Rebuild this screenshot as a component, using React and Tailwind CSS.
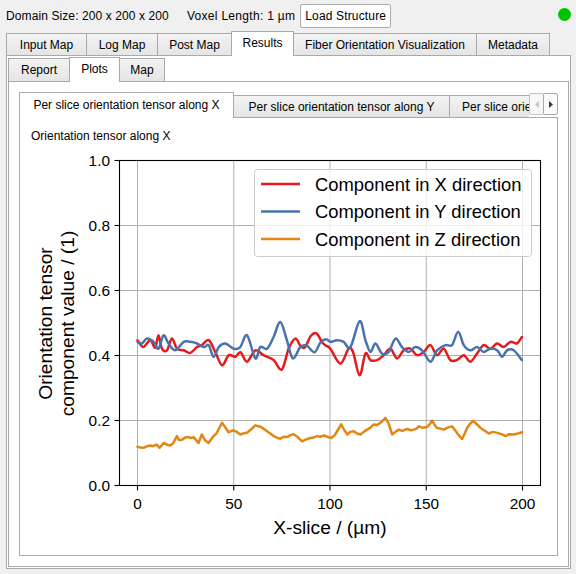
import React from 'react'

// plot geometry, page pixels
const L = 119.5
const R = 540.5
const T = 160.5
const B = 485.5
const X = u => 137.5 + u * 1.925
const Y = v => 485.5 - v * 325

const RED = [[0,0.447],[3,0.426],[6.6,0.447],[9.2,0.424],[10.9,0.462],[12.7,0.421],[15.3,0.416],[17.9,0.452],[20.5,0.421],[24,0.416],[27.4,0.408],[30.9,0.426],[33.5,0.432],[37,0.447],[40.4,0.411],[43.9,0.37],[47.4,0.401],[50.8,0.396],[53.5,0.41],[56.9,0.381],[61.2,0.416],[65.5,0.401],[70.7,0.386],[75,0.357],[78.5,0.421],[82,0.452],[84.6,0.43],[87,0.425],[90,0.46],[93,0.468],[96,0.44],[98,0.43],[100.2,0.421],[105.4,0.375],[109.7,0.421],[112,0.41],[115.4,0.339],[118.4,0.406],[121,0.386],[124.5,0.386],[127.9,0.401],[131.4,0.421],[134.8,0.391],[138.3,0.416],[141.8,0.421],[145.2,0.401],[148.7,0.411],[152.2,0.432],[155.6,0.401],[159.1,0.421],[162.5,0.386],[166,0.386],[169.5,0.401],[172.9,0.381],[176.4,0.406],[179.8,0.432],[183.3,0.421],[186.8,0.437],[190.2,0.426],[193.7,0.442],[197.1,0.437],[199.7,0.457]]

const BLUE = [[0,0.442],[2.3,0.437],[4.9,0.452],[8.4,0.442],[10.9,0.421],[13.5,0.462],[16.1,0.437],[19.6,0.416],[24,0.442],[27.4,0.442],[30.9,0.437],[34.4,0.426],[37,0.432],[39.5,0.396],[42.2,0.426],[45.6,0.437],[50,0.421],[53.4,0.426],[56.9,0.462],[61.2,0.391],[63.8,0.426],[67.3,0.421],[70.7,0.457],[74.2,0.503],[77.6,0.447],[80.7,0.391],[84.6,0.426],[88,0.43],[92,0.41],[95,0.44],[98,0.45],[100.2,0.442],[103.7,0.447],[107.1,0.442],[110.6,0.426],[115.4,0.506],[118.4,0.447],[121,0.411],[123.6,0.437],[127,0.406],[130.5,0.411],[134,0.452],[137.4,0.426],[140.9,0.411],[144.3,0.426],[147.8,0.416],[152.2,0.381],[155.6,0.416],[160,0.432],[163.4,0.432],[166.6,0.473],[169.5,0.432],[172.9,0.416],[176.4,0.426],[179.8,0.411],[183.3,0.421],[186.8,0.416],[189.4,0.396],[192,0.416],[195.4,0.416],[199.7,0.386]]

const ORANGE = [[0,0.119],[1.5,0.117],[3.1,0.116],[5,0.121],[6.6,0.123],[8,0.121],[10,0.126],[11.5,0.116],[13.6,0.131],[15,0.126],[17,0.123],[18.5,0.13],[20.5,0.152],[21.5,0.14],[23.1,0.141],[25,0.148],[26.5,0.149],[28,0.146],[29.1,0.149],[31.7,0.131],[33.4,0.157],[35,0.14],[36.9,0.131],[38,0.14],[39.5,0.152],[41,0.16],[43.9,0.193],[45.5,0.18],[47.3,0.164],[49.9,0.17],[51.5,0.165],[53.4,0.157],[55,0.16],[56.8,0.162],[58.5,0.17],[61.2,0.185],[63.8,0.181],[65.5,0.175],[67.3,0.167],[69,0.16],[70.7,0.152],[72.5,0.147],[74.2,0.144],[76,0.15],[77.7,0.149],[79.5,0.155],[81.1,0.158],[83,0.15],[85.5,0.136],[87.5,0.142],[89.8,0.146],[91.5,0.148],[93.4,0.152],[95,0.15],[96.8,0.154],[98.5,0.15],[100.6,0.146],[102.5,0.155],[104,0.17],[105.8,0.188],[107.5,0.17],[109,0.157],[110.5,0.165],[112.4,0.167],[114,0.16],[115.8,0.157],[117.5,0.165],[119.3,0.172],[121,0.178],[122.7,0.188],[124.5,0.186],[126.2,0.193],[127.5,0.2],[128.8,0.208],[130.5,0.19],[132.3,0.157],[134,0.165],[135.7,0.172],[137.5,0.168],[140.1,0.174],[142,0.17],[143.5,0.172],[145,0.175],[146.1,0.182],[148,0.178],[150.4,0.18],[152,0.19],[153,0.2],[154.2,0.188],[155.6,0.177],[157.5,0.175],[159.1,0.172],[161,0.178],[163.4,0.182],[165,0.17],[166.8,0.155],[168.6,0.143],[170,0.16],[171.2,0.177],[172.8,0.19],[174.4,0.199],[176,0.19],[178.2,0.177],[180,0.17],[182.5,0.16],[184.5,0.165],[186.8,0.162],[189,0.158],[191.2,0.152],[193,0.158],[195.5,0.157],[197.5,0.16],[199.8,0.164]]

// catmull-rom through the traced points
function smoothPath(pts) {
  const p = pts.map(([u, v]) => [X(u), Y(v)])
  const f = n => n.toFixed(2)
  let d = `M${f(p[0][0])},${f(p[0][1])}`
  for (let i = 0; i < p.length - 1; i++) {
    const p0 = p[i - 1] || p[i]
    const p1 = p[i]
    const p2 = p[i + 1]
    const p3 = p[i + 2] || p2
    const c1x = p1[0] + (p2[0] - p0[0]) / 6
    const c1y = p1[1] + (p2[1] - p0[1]) / 6
    const c2x = p2[0] - (p3[0] - p1[0]) / 6
    const c2y = p2[1] - (p3[1] - p1[1]) / 6
    d += ` C${f(c1x)},${f(c1y)} ${f(c2x)},${f(c2y)} ${f(p2[0])},${f(p2[1])}`
  }
  return d
}

const linePath = pts => 'M' + pts.map(([u, v]) => `${X(u).toFixed(2)},${Y(v).toFixed(2)}`).join(' L')

const SERIES = [
  { label: 'Component in X direction', color: '#e41a1c', d: smoothPath(RED) },
  { label: 'Component in Y direction', color: '#4a72ac', d: smoothPath(BLUE) },
  { label: 'Component in Z direction', color: '#e38614', d: linePath(ORANGE) },
]

const XT = [0, 50, 100, 150, 200]
const YT = [0, 0.2, 0.4, 0.6, 0.8, 1.0]

function Plot() {
  return (
    <svg width="536" height="408" className="block">
      <g transform="translate(-20 -146)" fontFamily="'Liberation Sans', Arial, sans-serif" fill="#000">
        {XT.map(u => (
          <line key={'gx' + u} x1={X(u)} x2={X(u)} y1={T} y2={B} stroke="#b0b0b0" strokeWidth="1" />
        ))}
        {YT.map(v => (
          <line key={'gy' + v} x1={L} x2={R} y1={Y(v)} y2={Y(v)} stroke="#b0b0b0" strokeWidth="1" />
        ))}

        {SERIES.map(s => (
          <path key={s.label} d={s.d} fill="none" stroke={s.color} strokeWidth="2.5" strokeLinejoin="round" strokeLinecap="round" />
        ))}

        <rect x={L} y={T} width={R - L} height={B - T} fill="none" stroke="#000" strokeWidth="1.1" />

        {XT.map(u => (
          <g key={'tx' + u}>
            <line x1={X(u)} x2={X(u)} y1={B} y2={B + 5} stroke="#000" strokeWidth="1.1" />
            <text x={X(u)} y="508.5" fontSize="15.4" textAnchor="middle">{u}</text>
          </g>
        ))}
        {YT.map(v => (
          <g key={'ty' + v}>
            <line x1={L - 5} x2={L} y1={Y(v)} y2={Y(v)} stroke="#000" strokeWidth="1.1" />
            <text x="110" y={Y(v) + 5.5} fontSize="15.4" textAnchor="end">{v.toFixed(1)}</text>
          </g>
        ))}

        <text x={(L + R) / 2} y="533.5" fontSize="19.2" textAnchor="middle">X-slice / (µm)</text>
        <text transform="translate(51.7 323.5) rotate(-90)" fontSize="19.2" textAnchor="middle">Orientation tensor</text>
        <text transform="translate(74 323.5) rotate(-90)" fontSize="19.2" textAnchor="middle">component value / (1)</text>

        <rect x="254.5" y="169.5" width="277" height="87" rx="3" fill="#fff" fillOpacity="0.8" stroke="#cccccc" strokeWidth="1" />
        {SERIES.map((s, i) => {
          const ly = 184 + i * 27.5
          return (
            <g key={'lg' + i}>
              <line x1="261" x2="300" y1={ly} y2={ly} stroke={s.color} strokeWidth="2.5" />
              <text x="315" y={ly + 6.8} fontSize="18.4">{s.label}</text>
            </g>
          )
        })}
      </g>
    </svg>
  )
}

const TOP_TABS = [
  { label: 'Input Map', w: 'w-[81px]' },
  { label: 'Log Map', w: 'w-[72px]' },
  { label: 'Post Map', w: 'w-[75px]' },
  { label: 'Results', w: 'w-[63px]', active: true },
  { label: 'Fiber Orientation Visualization', w: 'w-[184px]' },
  { label: 'Metadata', w: 'w-[74px]' },
]

const SUB_TABS = [
  { label: 'Report', w: 'w-[62px]' },
  { label: 'Plots', w: 'w-[51px]', active: true },
  { label: 'Map', w: 'w-[46px]' },
]

const tabBase = 'flex items-center justify-center whitespace-nowrap border border-[#a9a9a9]'
const tabIdle = 'bg-linear-to-b from-[#f3f3f3] to-[#e5e5e5]'
const tabOn = 'bg-white border-b-0 relative z-10'

export default function App() {
  return (
    <div className="w-[576px] h-[574px] overflow-hidden bg-[#f0f0f0] pl-[6px] pr-[5px] text-[12px] leading-[14px] text-black font-['Liberation_Sans',Arial,sans-serif]">
      {/* header row */}
      <div className="h-[31px] flex items-center">
        <span className="tracking-[0.1px]">Domain Size: 200 x 200 x 200</span>
        <span className="ml-[18px] tracking-[0.3px]">Voxel Length: 1 µm</span>
        <button className="ml-[5px] h-[24px] pl-[4px] pr-[4px] border border-[#adadad] bg-[#fdfdfd] rounded-[2px] tracking-[0.15px]">
          Load Structure
        </button>
        <div className="flex-1" />
        <div className="self-start mt-[8px] w-[13px] h-[13px] rounded-full bg-[#00c400]" />
      </div>

      {/* main tabs */}
      <div className="flex items-end h-[25px] -mb-px">
        {TOP_TABS.map((t, i) => (
          <div
            key={t.label}
            className={`${tabBase} ${t.w} ${i > 0 ? '-ml-px' : ''} ${t.active ? `${tabOn} h-[25px] pb-[2px]` : `${tabIdle} h-[23px]`}`}
          >
            {t.label}
          </div>
        ))}
      </div>

      <div className="h-[514px] border border-[#a9a9a9] bg-white p-px flex flex-col">
        {/* result sub tabs */}
        <div className="flex items-end h-[25px] -mb-px">
          {SUB_TABS.map((t, i) => (
            <div
              key={t.label}
              className={`${tabBase} ${t.w} ${i > 0 ? '-ml-px' : ''} ${t.active ? `${tabOn} h-[25px] pb-[2px]` : `${tabIdle} h-[24px]`}`}
            >
              {t.label}
            </div>
          ))}
        </div>

        <div className="flex-1 border border-[#a9a9a9] p-[10px] flex flex-col">
          {/* plot tabs */}
          <div className="flex h-[26px] -mb-px">
            <div className="flex-1 flex items-end overflow-hidden">
              <div className={`${tabBase} ${tabOn} w-[215px] h-[26px] pb-[2px] shrink-0`}>
                Per slice orientation tensor along X
              </div>
              <div className={`${tabBase} ${tabIdle} -ml-px w-[217px] h-[23px] shrink-0`}>
                Per slice orientation tensor along Y
              </div>
              <div className={`${tabBase} ${tabIdle} -ml-px w-[216px] h-[23px] shrink-0 justify-start pl-[12px]`}>
                Per slice orientation tensor along Z
              </div>
            </div>
            <div className="flex self-start mt-px">
              <div className="w-[15px] h-[22px] flex items-center justify-center border border-[#c2c2c2] rounded-[2px] bg-[#f7f7f7]">
                <svg width="4" height="7" viewBox="0 0 4 7"><polygon points="4,0 0,3.5 4,7" fill="#c6c6c6" /></svg>
              </div>
              <div className="-ml-px w-[15px] h-[22px] flex items-center justify-center border border-[#a9a9a9] rounded-[2px] bg-[#fbfbfb]">
                <svg width="4" height="7" viewBox="0 0 4 7"><polygon points="0,0 4,3.5 0,7" fill="#3a3a3a" /></svg>
              </div>
            </div>
          </div>

          <div className="flex-1 border border-[#a9a9a9] bg-white flex flex-col">
            <div className="h-[28px] pt-[11px] pl-[11px]">Orientation tensor along X</div>
            <Plot />
          </div>
        </div>
      </div>
    </div>
  )
}
